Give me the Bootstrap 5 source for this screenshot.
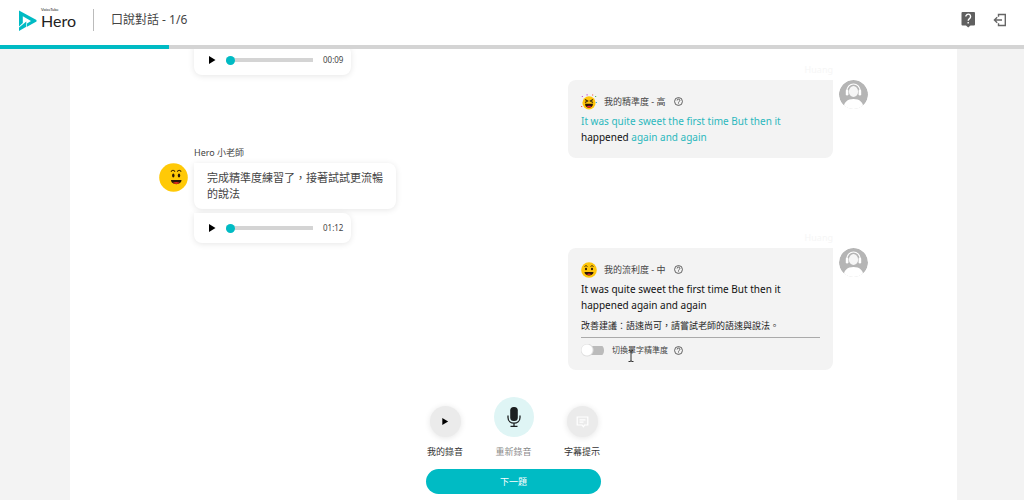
<!DOCTYPE html>
<html lang="zh-Hant">
<head>
<meta charset="utf-8">
<meta name="viewport" content="width=device-width, initial-scale=1">
<title>口說對話</title>
<link href="https://cdn.jsdelivr.net/npm/bootstrap@5.3.0/dist/css/bootstrap.min.css" rel="stylesheet">
<style>
:root { --teal: #00bbc4; --soft: #f3f3f3; }
body { font-family: "Noto Sans", "Noto Sans CJK TC", sans-serif; font-size: 9px; line-height: 14px; color: #444; background: #fff; }
button { border: 0; padding: 0; background: none; color: inherit; }
svg { display: block; flex: none; }
.topbar { height: 45px; padding: 0 16px 4px 18px; }
.brand { color: #222; font-family: Lato, sans-serif; }
.brand-mini { font-size: 4px; line-height: 6px; }
.brand-name { font-size: 16px; line-height: 16px; }
.title-sep { width: 1px; height: 22px; background: #bbb; margin: 0 17px 0 17px; }
.page-title { font-size: 12px; line-height: 18px; font-weight: 400; }
.progress.lesson { height: 4px; border-radius: 0; background: #d4d4d4; }
.lesson .progress-bar { background: var(--teal); }
.stage { background: var(--soft); padding: 0 67px 0 70px; }
.sheet { background: #fff; }
.chat { padding: 0 89px 27px; gap: 5px; }
.msg { gap: 6px; }
.avatar { width: 29px; height: 29px; }
.sender { position: absolute; bottom: calc(100% + 3px); white-space: nowrap; }
.sender-me { right: 0; color: #f6f6f6; }
.bubble { border-radius: 8px; width: 265px; background: var(--soft); padding: 13px; border-top-right-radius: 0; }
.bubble-hero { width: 202px; background: #fff; border-radius: 0 8px 8px 8px; padding: 7px 13px; font-size: 11px; line-height: 16px; box-shadow: 0 1px 6px #0000001a; }
.player { width: 157px; height: 30px; background: #fff; border-radius: 0 8px 8px 8px; padding: 0 8px 0 14px; box-shadow: 0 1px 6px #0000001a; font-size: 8px; }
.seek { appearance: none; width: 87px; height: 9px; margin: 0 10px; background: linear-gradient(#d4d4d4, #d4d4d4) center / 100% 4px no-repeat; border-radius: 3px; }
.seek::-webkit-slider-thumb { appearance: none; width: 9px; height: 9px; border-radius: 50%; background: var(--teal); }
.score { gap: 7px; height: 17px; }
.speech { font-size: 10px; line-height: 16px; color: #111; margin: 3px 0 0; }
.good { color: #2bb8bd; }
.advice { color: #222; margin: 6px 0 4px; }
.rule { margin: 0; border-top: 1px solid #aaa; opacity: 1; }
.toggle-row { gap: 8px; font-size: 8px; padding-top: 5px; }
.toggle-text { margin-right: -3px; }
.toggle { appearance: none; width: 23px; height: 13px; margin: 0; background: radial-gradient(circle at 6px 6px, #fff 5px, #ddd 6px, transparent 7px), linear-gradient(#bbb, #bbb) right center / 18px 9px no-repeat; border-radius: 6px; }
.ibeam { position: absolute; left: 15px; top: 6px; }
.controls { width: 175px; padding-bottom: 6px; }
.control-item { width: 38px; color: #333; white-space: nowrap; }
.round { width: 31px; height: 31px; border-radius: 50%; background: #ebebeb; box-shadow: 0 1px 6px #0000001a; margin-bottom: 8px; }
.round-mic { width: 40px; height: 40px; background: #dff5f5; box-shadow: none; }
.next { background: var(--teal); color: #fff; height: 25px; margin-top: 10px; }
</style>
</head>
<body class="d-flex flex-column vh-100 overflow-hidden">
<svg width="0" height="0" class="position-absolute" aria-hidden="true">
  <symbol id="help" viewBox="0 0 12 12"><circle cx="6" cy="6" r="4.300" fill="none" stroke="#444" stroke-width=".9"/><path d="M4.500 4.900a1.500 1.500 0 1 1 2.300 1.200q-.8.500-.8 1.200M6 8.100v.8" fill="none" stroke="#444" stroke-width=".9"/></symbol>
  <symbol id="play" viewBox="0 0 8 10"><path d="M1 1l6.500 4-6.500 4z" fill="#000"/></symbol>
  <symbol id="me" viewBox="0 0 29 29"><clipPath id="disc"><circle cx="14.500" cy="14.500" r="14.500"/></clipPath><g clip-path="url(#disc)"><circle cx="14.500" cy="14.500" r="14.500" fill="#b5b5b5"/><path d="M4.500 29c0-7 4-10 10-10s10 3 10 10z" fill="#fff"/><ellipse cx="14.500" cy="11.500" rx="4.600" ry="5.400" fill="#f6f6f6"/><path d="M7.800 11.500C7.800 1.500 21.200 1.500 21.200 11.500" fill="none" stroke="#fff" stroke-width="1.200"/><rect x="6.800" y="9.500" width="2.600" height="6" rx="1.300" fill="#fff"/><rect x="19.600" y="9.500" width="2.600" height="6" rx="1.300" fill="#fff"/></g></symbol>
</svg>

<header class="topbar d-flex align-items-center">
  <a href="#" class="brand d-flex align-items-center text-decoration-none">
    <svg width="19" height="22" viewBox="0 0 19 22"><path d="M1 1.500L18.500 11v1.600L9 17.800v-3.400l4-2.500L4.800 7.200V14L1 17.500z" fill="#00bbc4"/><path d="M1 22v-3.500l7.300-6v5.200z" fill="#00bbc4"/></svg>
    <span class="d-flex flex-column ms-1 pb-1"><span class="brand-mini">VoiceTube</span><span class="brand-name">Hero</span></span>
  </a>
  <span class="title-sep"></span>
  <h1 class="page-title m-0">口說對話 - 1/6</h1>
  <button type="button" class="ms-auto me-3" aria-label="說明"><svg width="16" height="18" viewBox="0 0 16 18"><path d="M2.500 1h11.500a1 1 0 0 1 1 1v11.500a1 1 0 0 1-1 1H10.500L8.200 16.600 6 14.500H2.500a1 1 0 0 1-1-1V2a1 1 0 0 1 1-1z" fill="#606060"/><path d="M5.800 5.600a2.400 2.400 0 1 1 3.700 2Q8.200 8.500 8.200 9.800M8.200 11v1.600" fill="none" stroke="#fff" stroke-width="1.400"/></svg></button>
  <button type="button" aria-label="離開"><svg width="16" height="16" viewBox="0 0 16 16" fill="none" stroke="#666" stroke-width="1.400"><path d="M6.500 4.800V2.500h6.800v11H6.500v-2.300M10 8H2.500M5.200 5.200L2.400 8l2.800 2.800"/></svg></button>
</header>
<div class="progress lesson flex-shrink-0" role="progressbar" aria-label="進度" aria-valuenow="1" aria-valuemin="0" aria-valuemax="6"><div class="progress-bar" style="width:16.5%"></div></div>

<main class="stage flex-fill overflow-hidden">
  <div class="sheet h-100 d-flex flex-column">
    <section class="chat flex-fill d-flex flex-column justify-content-end overflow-hidden">
      <div class="msg d-flex">
        <span class="avatar"></span>
        <div class="player d-flex align-items-center">
          <button type="button" aria-label="播放"><svg width="8" height="10"><use href="#play"/></svg></button>
          <input class="seek" type="range" value="0" aria-label="播放位置"><span>00:09</span>
        </div>
      </div>
      <div class="msg d-flex justify-content-end">
        <div class="bubble position-relative">
          <span class="sender sender-me">Huang</span>
          <div class="score d-flex align-items-center">
            <svg width="16" height="16" viewBox="0 0 16 16"><circle cx="8" cy="8.800" r="6.600" fill="#ffc60a"/><path d="M4 5.500l2.700 1.500L4 8.500M12 5.500L9.300 7 12 8.500" fill="none" stroke="#3a2a10" stroke-width="1.100"/><path d="M4 9.700h8c0 5.500-8 5.500-8 0z" fill="#2a1608"/><path d="M5.500 12.700q2.500-1.800 5 0-2.500 1.800-5 0" fill="#e23"/><path d="M.8 2.500h1.200M5.500.8h1.200" stroke="#c35bd8" stroke-width="1.200"/><path d="M11 1h1.200M0 12.500h1.200" stroke="#f6604a" stroke-width="1.200"/><path d="M14 2.500h1.200" stroke="#58bd5b" stroke-width="1.200"/><path d="M14.800 8.500H16" stroke="#33a6df" stroke-width="1.200"/></svg>
            <span>我的精準度 - 高</span><svg width="11" height="11"><use href="#help"/></svg>
          </div>
          <p class="speech"><span class="good">It was quite sweet the first time But then it</span> happened <span class="good">again and again</span></p>
        </div>
        <svg class="avatar"><use href="#me"/></svg>
      </div>
      <div class="msg d-flex">
        <svg class="avatar" viewBox="0 0 29 29"><circle cx="14.500" cy="14.500" r="14.300" fill="#ffc907"/><path d="M12 8.600q2-2.600 4 0M18.200 8.600q2-2.600 4 0" fill="none" stroke="#3a2200" stroke-width="1.100"/><ellipse cx="14.300" cy="12.500" rx="1.200" ry="1.900" fill="#2a1608"/><ellipse cx="20" cy="12.500" rx="1.200" ry="1.900" fill="#2a1608"/><path d="M12 17h10.500c0 5.500-10.500 5.500-10.500 0z" fill="#2a1608"/><path d="M13.800 19.800q3.500-1.800 7 0-3.500 2.400-7 0" fill="#e22b1e"/></svg>
        <div class="position-relative d-flex flex-column gap-1">
          <span class="sender">Hero 小老師</span>
          <div class="bubble-hero">完成精準度練習了，接著試試更流暢的說法</div>
          <div class="player d-flex align-items-center">
            <button type="button" aria-label="播放"><svg width="8" height="10"><use href="#play"/></svg></button>
            <input class="seek" type="range" value="0" aria-label="播放位置"><span>01:12</span>
          </div>
        </div>
      </div>
      <div class="msg d-flex justify-content-end">
        <div class="bubble position-relative">
          <span class="sender sender-me">Huang</span>
          <div class="score d-flex align-items-center">
            <svg width="16" height="16" viewBox="0 0 16 16"><circle cx="8" cy="8" r="7.800" fill="#ffc60a"/><path d="M3.500 4.500q1.500-1.800 3 0M9.500 4.500q1.500-1.800 3 0" fill="none" stroke="#3a2200" stroke-width=".9"/><ellipse cx="5" cy="7" rx="1" ry="1.300" fill="#2a1608"/><ellipse cx="11" cy="7" rx="1" ry="1.300" fill="#2a1608"/><path d="M3.500 10h9c0 4.500-9 4.500-9 0z" fill="#2a1608"/><path d="M5.800 12.200q2.200-1.200 4.400 0-2.200 1.400-4.400 0" fill="#e23"/></svg>
            <span>我的流利度 - 中</span><svg width="11" height="11"><use href="#help"/></svg>
          </div>
          <p class="speech">It was quite sweet the first time But then it happened again and again</p>
          <p class="advice">改善建議：語速尚可，請嘗試老師的語速與說法。</p>
          <hr class="rule">
          <div class="toggle-row d-flex align-items-center">
            <input class="toggle" type="checkbox" role="switch" id="wordScore">
            <label for="wordScore" class="toggle-text position-relative">切換單字精準度<svg class="ibeam" width="8" height="14" viewBox="0 0 8 14"><path d="M1.500 1.500h2l.5.800.5-.8h2M4 2v10M1.500 12.500h2l.5-.8.5.8h2" fill="none" stroke="#333"/></svg></label>
            <svg width="11" height="11"><use href="#help"/></svg>
          </div>
        </div>
        <svg class="avatar"><use href="#me"/></svg>
      </div>
    </section>

    <footer class="controls mx-auto">
      <div class="d-flex justify-content-between align-items-end">
        <button type="button" class="control-item d-flex flex-column align-items-center"><span class="round d-flex align-items-center justify-content-center"><svg width="8" height="9"><use href="#play"/></svg></span>我的錄音</button>
        <button type="button" class="control-item d-flex flex-column align-items-center text-black-50"><span class="round round-mic d-flex align-items-center justify-content-center"><svg width="16" height="22" viewBox="0 0 16 22"><rect x="4.200" y="1" width="7.600" height="14" rx="3.500" fill="#1b1f20"/><path d="M2 9.500v2c0 7.500 12 7.500 12 0v-2M8 17v3.500M4.500 20.300h7" fill="none" stroke="#1b1f20" stroke-width="1.300"/></svg></span>重新錄音</button>
        <button type="button" class="control-item d-flex flex-column align-items-center"><span class="round d-flex align-items-center justify-content-center"><svg width="13" height="12" viewBox="0 0 13 12" fill="none" stroke="#fff" stroke-width="1.200"><path d="M1.200 1h10.600v8H8.500l-1 1.800L6 9H1.200zM3.500 3.800h6M3.500 6.200h4"/></svg></span>字幕提示</button>
      </div>
      <button type="button" class="next rounded-pill w-100">下一題</button>
    </footer>
  </div>
</main>
<script src="https://cdn.jsdelivr.net/npm/bootstrap@5.3.0/dist/js/bootstrap.bundle.min.js"></script>
</body>
</html>
